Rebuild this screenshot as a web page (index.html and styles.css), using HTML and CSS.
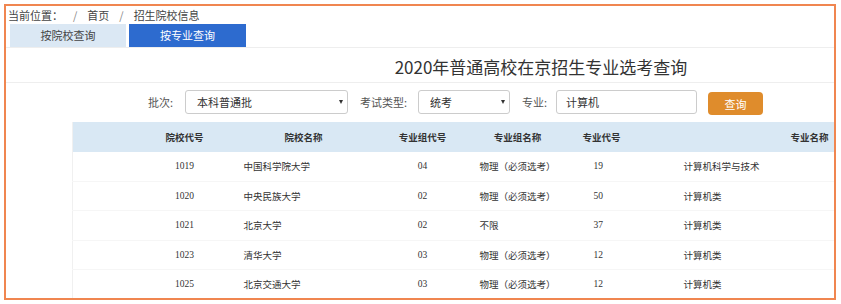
FILE: index.html
```html
<!DOCTYPE html>
<html lang="zh-CN">
  <head>
    <meta charset="utf-8">
    <title>招生院校信息</title>
    <link rel="stylesheet" href="styles.css">
  </head>
  <body>
    <div class="frame">
      <div class="page">
        <div class="crumb">
          当前位置：<span class="sep">/</span>首页<span class="sep">/</span>招生院校信息
        </div>
        <div class="tabs">
          <a class="tab" href="#school">按院校查询</a>
          <a class="tab tab-active" href="#major">按专业查询</a>
        </div>
        <h1 class="title">2020年普通高校在京招生专业选考查询</h1>

        <!-- filters -->
        <form class="filters" onsubmit="return false">
          <label class="label label-batch">批次:</label>
          <div class="select select-batch">
            <select>
              <option>本科普通批</option>
              <option>本科提前批</option>
            </select>
          </div>
          <label class="label label-type">考试类型:</label>
          <div class="select select-type">
            <select>
              <option>统考</option>
              <option>单考</option>
            </select>
          </div>
          <label class="label label-major">专业:</label>
          <input class="input" type="text" value="计算机">
          <button class="btn" type="submit">查询</button>
        </form>

        <!-- result table -->
        <table class="result">
          <colgroup>
            <col class="c0"><col class="c1"><col class="c2"><col class="c3">
            <col class="c4"><col class="c5"><col class="c6">
          </colgroup>
          <thead>
            <tr>
              <th></th>
              <th>院校代号</th>
              <th>院校名称</th>
              <th>专业组代号</th>
              <th>专业组名称</th>
              <th>专业代号</th>
              <th>专业名称</th>
            </tr>
          </thead>
          <tbody>
            <tr>
              <td></td><td class="mid">1019</td><td class="name">中国科学院大学</td><td class="mid">04</td>
              <td class="group">物理（必须选考）</td><td class="code">19</td><td class="major">计算机科学与技术</td>
            </tr>
            <tr>
              <td></td><td class="mid">1020</td><td class="name">中央民族大学</td><td class="mid">02</td>
              <td class="group">物理（必须选考）</td><td class="code">50</td><td class="major">计算机类</td>
            </tr>
            <tr>
              <td></td><td class="mid">1021</td><td class="name">北京大学</td><td class="mid">02</td>
              <td class="group">不限</td><td class="code">37</td><td class="major">计算机类</td>
            </tr>
            <tr>
              <td></td><td class="mid">1023</td><td class="name">清华大学</td><td class="mid">03</td>
              <td class="group">物理（必须选考）</td><td class="code">12</td><td class="major">计算机类</td>
            </tr>
            <tr>
              <td></td><td class="mid">1025</td><td class="name">北京交通大学</td><td class="mid">03</td>
              <td class="group">物理（必须选考）</td><td class="code">12</td><td class="major">计算机类</td>
            </tr>
          </tbody>
        </table>
      </div>
    </div>
  </body>
</html>
```

FILE: styles.css
```css
body{
  margin:0;
  background:#fff;
  color:#333;
  font-family:"Noto Sans CJK SC", "Liberation Sans", sans-serif;
}
.frame{
  margin:4px;
  width:828px;
  height:292px;
  border:2px solid #f08650;
  overflow:hidden;
  background:#fff;
}
.page{
  width:1070px;
}
/*breadcrumb*/
.crumb{
  height:18px;
  line-height:18px;
  padding-left:2px;
  font-size:11px;
  color:#444;
}
.crumb .sep{
  margin:0 10px;
  color:#888;
}
/*tabs*/
.tabs{
  display:flex;
  gap:3px;
  height:23px;
  padding-left:4px;
  border-bottom:1px solid #eee;
}
.tab{
  width:116px;
  line-height:23px;
  text-align:center;
  font-size:11px;
  color:#444;
  text-decoration:none;
  background:#dbe8f4;
}
.tab-active{
  width:117px;
  color:#fff;
  background:#2d6bcf;
}
.title{
  margin:0;
  padding-top:3px;
  line-height:31px;
  text-align:center;
  font-size:17px;
  font-weight:normal;
  color:#333;
  border-bottom:1px solid #eee;
}
/*filters*/
.filters{
  display:flex;
  align-items:flex-start;
  height:24px;
  margin:7px 0 0;
  padding-left:142px;
  font-size:11px;
}
.label{
  line-height:24px;
  color:#555;
}
.label-batch{width:37px;}
.label-type{width:58px;}
.label-major{width:34px;}
.select{
  position:relative;
  height:24px;
  margin-right:12px;
}
.select-batch{width:163px;}
.select-type{width:92px;}
.select select{
  width:100%;
  height:24px;
  padding:0 0 0 11px;
  border:1px solid #ccc;
  border-radius:3px;
  background:#fff;
  font-family:inherit;
  font-size:11px;
  color:#333;
  appearance:none;
  -webkit-appearance:none;
  outline:none;
}
.select::after{
  content:"";
  position:absolute;
  right:5px;
  top:10px;
  border-left:2px solid transparent;
  border-right:2px solid transparent;
  border-top:4px solid #333;
  pointer-events:none;
}
.input{
  box-sizing:border-box;
  width:141px;
  height:24px;
  margin:0 11px 0 0;
  padding:0 0 0 9px;
  border:1px solid #ccc;
  border-radius:3px;
  font-family:inherit;
  font-size:11px;
  color:#333;
  outline:none;
}
.btn{
  width:55px;
  height:23px;
  margin-top:2px;
  border:none;
  border-radius:4px;
  background:#df8c2c;
  color:#fff;
  font-family:inherit;
  font-size:11px;
}
/*result table*/
.result{
  margin:8px 0 0 66px;
  width:900px;
  table-layout:fixed;
  border-collapse:collapse;
  border-left:1px solid #f0f0f0;
}
.c0{width:56px;}
.c1{width:112px;}
.c2{width:126px;}
.c3{width:112px;}
.c4{width:78px;}
.c5{width:90px;}
.c6{width:326px;}
.result th{
  height:30px;
  padding:0;
  background:#d9e8f4;
  font-size:9.5px;
  font-weight:bold;
  color:#333;
  text-align:center;
}
.result td{
  height:28.5px;
  padding:0;
  font-family:"Liberation Serif", "Noto Sans CJK SC", serif;
  font-size:9.5px;
  color:#333;
  border-bottom:1px solid #f6f6f6;
  white-space:nowrap;
}
.result td.mid{text-align:center;}
.result td.name{padding-left:3px;}
.result td.group{padding-left:1px;}
.result td.code{padding-left:37px;}
.result td.major{padding-left:37px;}
```
